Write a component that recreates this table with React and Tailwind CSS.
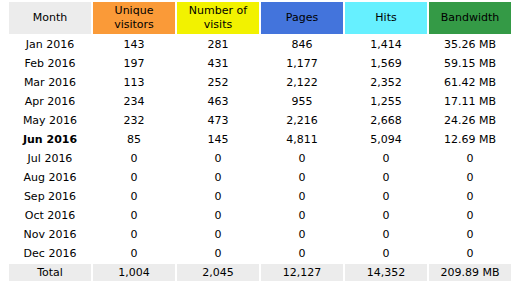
const rows = [
  ['Jan 2016', '143', '281', '846', '1,414', '35.26 MB'],
  ['Feb 2016', '197', '431', '1,177', '1,569', '59.15 MB'],
  ['Mar 2016', '113', '252', '2,122', '2,352', '61.42 MB'],
  ['Apr 2016', '234', '463', '955', '1,255', '17.11 MB'],
  ['May 2016', '232', '473', '2,216', '2,668', '24.26 MB'],
  ['Jun 2016', '85', '145', '4,811', '5,094', '12.69 MB'],
  ['Jul 2016', '0', '0', '0', '0', '0'],
  ['Aug 2016', '0', '0', '0', '0', '0'],
  ['Sep 2016', '0', '0', '0', '0', '0'],
  ['Oct 2016', '0', '0', '0', '0', '0'],
  ['Nov 2016', '0', '0', '0', '0', '0'],
  ['Dec 2016', '0', '0', '0', '0', '0'],
]

const headers = [
  { label: 'Month', bg: 'bg-[#ececec]' },
  { label: <>Unique<br />visitors</>, bg: 'bg-[#fa9a38]' },
  { label: <>Number of<br />visits</>, bg: 'bg-[#f2f200]' },
  { label: 'Pages', bg: 'bg-[#4374dc]' },
  { label: 'Hits', bg: 'bg-[#66f0ff]' },
  { label: 'Bandwidth', bg: 'bg-[#349a46]' },
]

export default function App() {
  return (
    <div className="w-[521px] h-[290px] bg-white text-black text-[11px] font-['DejaVu_Sans',Verdana,sans-serif]">
      <table className="ml-[7px] border-separate border-spacing-[2px]">
        <thead>
          <tr>
            {headers.map((h, i) => (
              <th key={i} className={`w-[82px] h-[32px] p-0 font-normal leading-[14px] text-center ${h.bg}`}>
                {h.label}
              </th>
            ))}
          </tr>
        </thead>
        <tbody>
          {rows.map(r => (
            <tr key={r[0]}>
              {r.map((c, i) => (
                <td
                  key={i}
                  className={`h-[17px] p-0 leading-[17px] text-center ${i === 0 && r[0] === 'Jun 2016' ? 'font-bold' : ''}`}
                >
                  {c}
                </td>
              ))}
            </tr>
          ))}
          <tr>
            {['Total', '1,004', '2,045', '12,127', '14,352', '209.89 MB'].map((c, i) => (
              <td key={i} className="h-[17px] p-0 leading-[17px] text-center bg-[#ececec]">{c}</td>
            ))}
          </tr>
        </tbody>
      </table>
    </div>
  )
}
